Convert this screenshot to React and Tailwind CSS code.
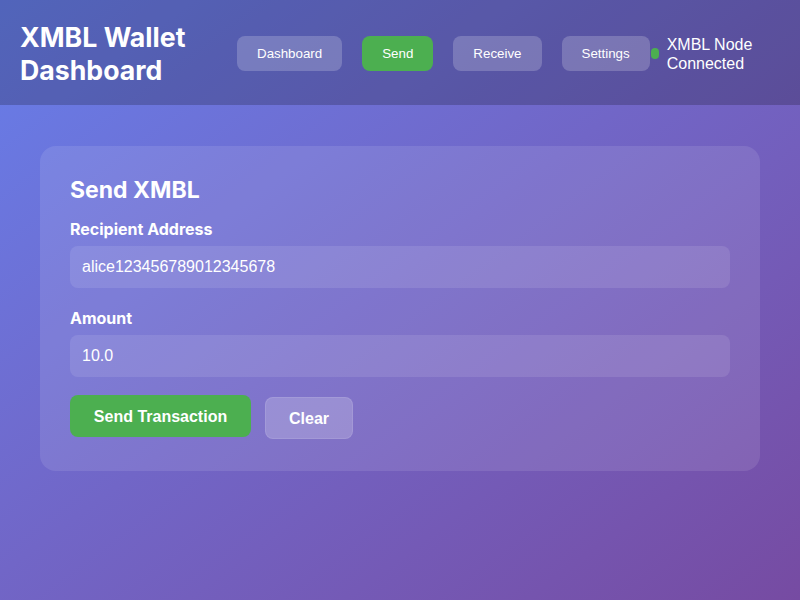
import React, { useState } from 'react';

const NAV = ['Dashboard', 'Send', 'Receive', 'Settings'];

export default function App() {
    const [active, setActive] = useState('Send');
    const [address, setAddress] = useState('alice123456789012345678');
    const [amount, setAmount] = useState('10.0');

    return (
        <div className="min-h-screen w-full bg-gradient-to-br from-[#667eea] to-[#764ba2] text-white font-['Inter',sans-serif]">
            {/* Header */}
            <header className="h-[105px] bg-black/20 flex items-center px-5">
                <h1 className="w-[217px] shrink-0 pt-[3px] text-[26.7px] leading-[33px] font-bold">
                    XMBL Wallet<br />Dashboard
                </h1>
                <nav className="flex gap-5 shrink-0 mt-[2px]">
                    {NAV.map(item => (
                        <button
                            key={item}
                            type="button"
                            onClick={() => setActive(item)}
                            className={`h-[35px] px-5 rounded-lg text-[13.333px] font-['Liberation_Sans',Arial,sans-serif] ${
                                active === item ? 'bg-[#4caf50]' : 'bg-white/20'
                            }`}
                        >
                            {item}
                        </button>
                    ))}
                </nav>
                <div className="flex items-center gap-2 ml-px mt-[2px]">
                    <span className="w-2 h-[11px] rounded-full bg-[#4caf50] shrink-0" />
                    <span className="text-base leading-[19px] font-['Liberation_Sans',Arial,sans-serif]">
                        XMBL Node<br />Connected
                    </span>
                </div>
            </header>

            {/* Send form */}
            <main className="px-10 pt-[41px]">
                <div className="bg-white/10 rounded-2xl px-[30px] pt-[30px] pb-[32px]">
                    <h2 className="text-[23px] leading-7 font-bold mb-4">Send XMBL</h2>

                    <label className="block text-base leading-[19px] font-bold mb-[7px]">Recipient Address</label>
                    <input
                        value={address}
                        onChange={e => setAddress(e.target.value)}
                        className="w-full h-[42px] px-3 rounded-lg bg-white/10 text-base outline-none font-['Liberation_Sans',Arial,sans-serif] mb-[21px]"
                    />

                    <label className="block text-base leading-[19px] font-bold mb-[7px]">Amount</label>
                    <input
                        value={amount}
                        onChange={e => setAmount(e.target.value)}
                        className="w-full h-[42px] px-3 rounded-lg bg-white/10 text-base outline-none font-['Liberation_Sans',Arial,sans-serif] mb-[18px]"
                    />

                    <div className="flex items-start gap-[14px] font-['Liberation_Sans',Arial,sans-serif]">
                        <button type="button" className="h-[42px] w-[181px] pt-[2px] rounded-lg bg-[#4caf50] text-base font-bold">
                            Send Transaction
                        </button>
                        <button
                            type="button"
                            onClick={() => { setAddress(''); setAmount(''); }}
                            className="mt-[2px] h-[42px] w-[88px] pt-[2px] rounded-lg bg-white/20 border border-white/10 text-base font-bold"
                        >
                            Clear
                        </button>
                    </div>
                </div>
            </main>
        </div>
    );
}
